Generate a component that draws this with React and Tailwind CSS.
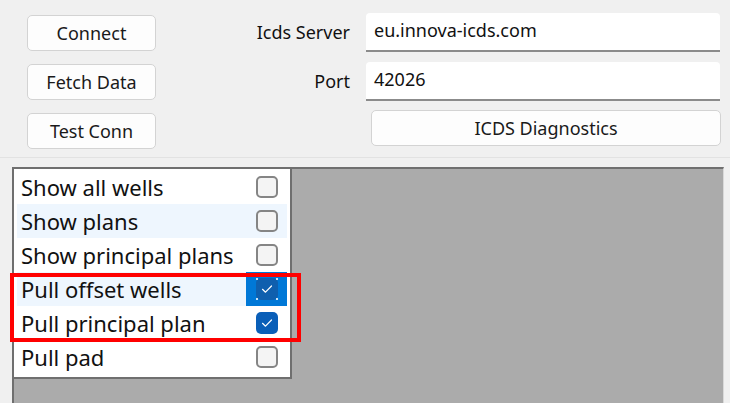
import React from "react";

const rows = [
  { label: "Show all wells", checked: false, tint: false },
  { label: "Show plans", checked: false, tint: true },
  { label: "Show principal plans", checked: false, tint: false },
  { label: "Pull offset wells", checked: true, tint: true, focus: true },
  { label: "Pull principal plan", checked: true, tint: false },
  { label: "Pull pad", checked: false, tint: false },
];

function Check({ checked, focus }) {
  if (!checked) {
    return <div className="w-[22px] h-[22px] rounded-[5px] border-2 border-[#858585] bg-[#f4f4f4]" />;
  }
  return (
    <div className={`relative w-[22px] h-[22px] rounded-[5px] flex items-center justify-center ${focus ? "bg-[#0f5fae]" : "bg-[#0a5fb8]"}`}>
      <svg width="16" height="16" viewBox="0 0 16 16" fill="none">
        <path d="M3.5 8.3 L6.5 11.2 L12.5 5" stroke="#ffffff" strokeWidth="1.2" strokeLinecap="round" strokeLinejoin="round" />
      </svg>
      {focus && (
        <>
          <span className="absolute left-0 top-0 w-[2px] h-[2px] bg-white/80" />
          <span className="absolute right-0 top-0 w-[2px] h-[2px] bg-white/80" />
          <span className="absolute left-0 bottom-0 w-[2px] h-[2px] bg-white/80" />
          <span className="absolute right-0 bottom-0 w-[2px] h-[2px] bg-white/80" />
        </>
      )}
    </div>
  );
}

function Button({ children, className = "" }) {
  return (
    <div className={`h-[36px] rounded-[5px] border border-[#d3d3d3] bg-[#fdfdfd] flex items-center justify-center text-[#1a1a1a] ${className}`}>
      {children}
    </div>
  );
}

export default function App() {
  return (
    <div
      className="relative w-[730px] h-[403px] overflow-hidden bg-[#f0f0f0] text-[#111]"
      style={{ fontFamily: "'Noto Sans', 'Open Sans', sans-serif" }}
    >
      {/* top toolbar */}
      <div className="h-[157px] flex text-[18px]">
        <div className="ml-[27px] mt-[15px] flex flex-col gap-[13px] w-[129px]">
          <Button>Connect</Button>
          <Button>Fetch Data</Button>
          <Button>Test Conn</Button>
        </div>
        <div className="mt-[13px] grid grid-cols-[194px_354px] gap-x-[16px] gap-y-[10px] h-fit">
          <div className="h-[39px] flex items-center justify-end">Icds Server</div>
          <div className="h-[39px] bg-white rounded-t-[4px] border-b-2 border-[#8b8b8b] flex items-center pl-[8px] pb-[2px]">
            eu.innova-icds.com
          </div>
          <div className="h-[39px] flex items-center justify-end">Port</div>
          <div className="h-[39px] bg-white rounded-t-[4px] border-b-2 border-[#8b8b8b] flex items-center pl-[8px] pb-[2px]">
            42026
          </div>
          <div />
          <Button className="ml-[5px] w-[350px] -mt-[1px]">ICDS Diagnostics</Button>
        </div>
      </div>
      <div className="h-px bg-[#e2e2e2]" />

      {/* workspace */}
      <div className="mt-[9px] ml-[12px] w-[712px] h-[240px] bg-[#ababab] border-t-2 border-l-2 border-[#6f6f6f] border-r border-r-[#d9d9d9]">
        <div className="w-[278px] bg-white border-r-2 border-b-2 border-[#6f6f6f] pt-[1px] pb-[3px] text-[22px]">
          {rows.map((r) => (
            <div key={r.label} className={`mx-[3px] h-[34px] flex items-center ${r.tint ? "bg-[#eef6fe]" : ""}`}>
              <span className="flex-1 pl-[4px] leading-none whitespace-nowrap">{r.label}</span>
              <div className={`w-[41px] h-full flex items-center justify-center ${r.focus ? "bg-[#0078d7]" : ""}`}>
                <Check checked={r.checked} focus={r.focus} />
              </div>
            </div>
          ))}
        </div>
      </div>

      {/* annotation */}
      <div className="absolute left-[10px] top-[273px] w-[291px] h-[69px] border-4 border-[#ff0000]" />
    </div>
  );
}
